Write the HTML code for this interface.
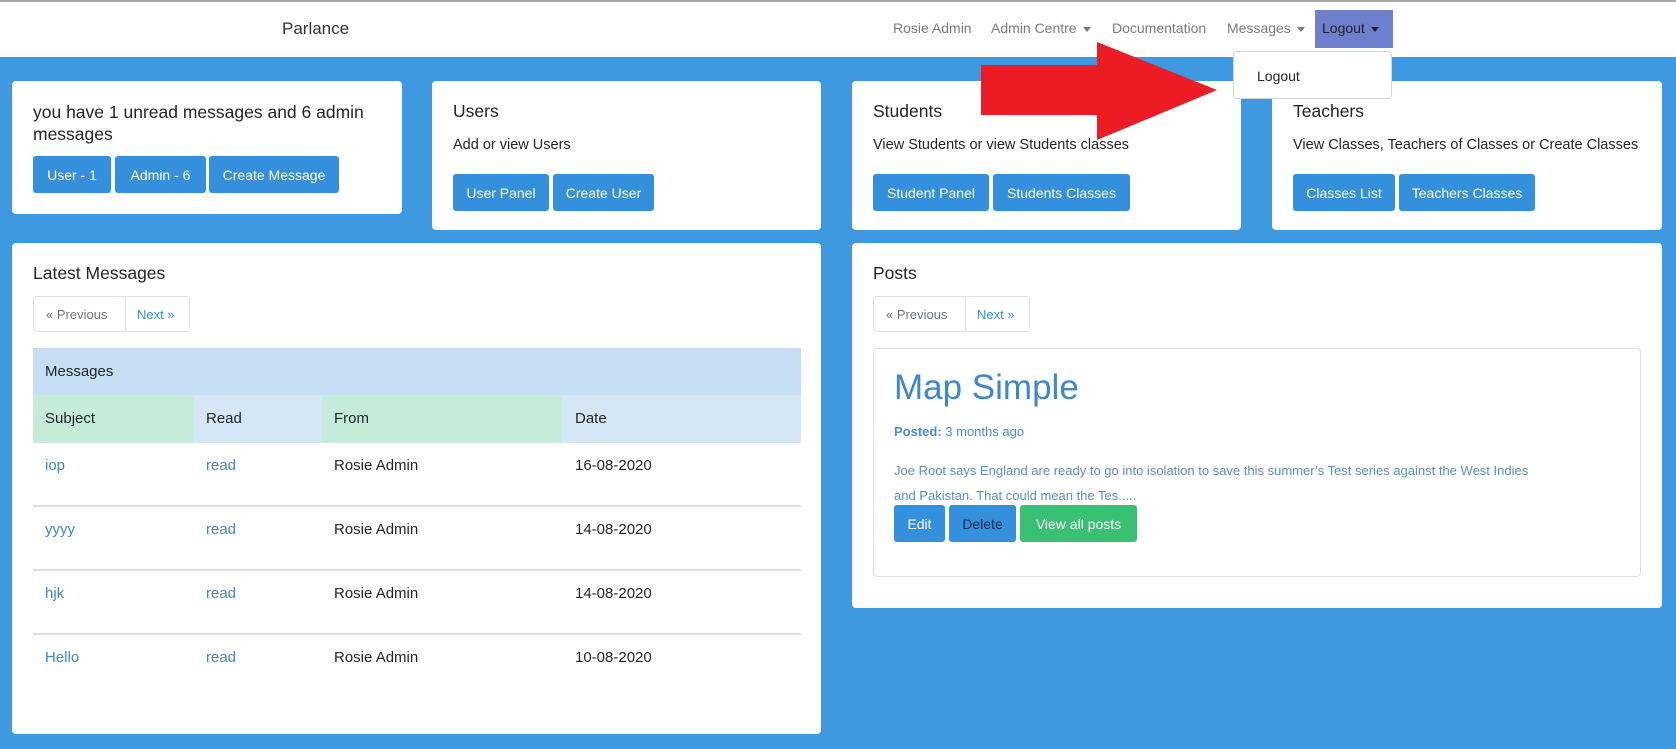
<!DOCTYPE html>
<html><head><meta charset="utf-8"><style>
*{box-sizing:border-box;margin:0;padding:0}
body{width:1676px;height:749px;overflow:hidden;background:#3f99e1;font-family:"Liberation Sans",sans-serif;color:#212529;position:relative}
.a{position:absolute}
.nav{left:0;top:0;width:1676px;height:57px;background:#fff;border-top:2px solid #a8a8a8}
.card{position:absolute;background:#fff;border-radius:4px}
.btn{position:absolute;background:#3490dc;color:#fff;font-size:14px;border-radius:3px;display:flex;align-items:center;justify-content:center;height:37px}
.h{position:absolute;font-size:17.5px;color:#212529}
.t{position:absolute;font-size:14.5px;color:#212529}
.ni{position:absolute;top:20px;font-size:14px;color:#7b7b7b}
.car{display:inline-block;width:0;height:0;border-left:4px solid transparent;border-right:4px solid transparent;border-top:5px solid currentColor;vertical-align:middle;margin-left:6px}
.pg{position:absolute;height:36px;border:1px solid #dee2e6;border-radius:3px;font-size:13px;background:#fff}
.pg span{position:absolute;top:10px}
.cell{position:absolute;font-size:15px}
.ln{position:absolute;left:33px;width:768px;height:2px;background:#dcdfe3}
</style></head><body>
<div class="a nav"></div>
<div class="a" style="left:282px;top:19px;font-size:17px;color:#333">Parlance</div>
<div class="ni" style="left:893px">Rosie Admin</div>
<div class="ni" style="left:991px">Admin Centre<span class="car"></span></div>
<div class="ni" style="left:1112px">Documentation</div>
<div class="ni" style="left:1227px">Messages<span class="car"></span></div>
<div class="a" style="left:1315px;top:10px;width:78px;height:38px;background:#6f7fcf"></div>
<div class="ni" style="left:1322px;color:#222">Logout<span class="car"></span></div>

<div class="card" style="left:12px;top:81px;width:390px;height:133px"></div>
<div class="h" style="left:33px;top:101px;line-height:22px;width:360px">you have 1 unread messages and 6 admin messages</div>
<div class="btn" style="left:33px;top:156px;width:78px">User - 1</div>
<div class="btn" style="left:115px;top:156px;width:91px">Admin - 6</div>
<div class="btn" style="left:209px;top:156px;width:130px">Create Message</div>

<div class="card" style="left:432px;top:81px;width:389px;height:149px"></div>
<div class="h" style="left:453px;top:101px">Users</div>
<div class="t" style="left:453px;top:137px">Add or view Users</div>
<div class="btn" style="left:453px;top:174px;width:96px">User Panel</div>
<div class="btn" style="left:553px;top:174px;width:101px">Create User</div>

<div class="card" style="left:852px;top:81px;width:389px;height:149px"></div>
<div class="h" style="left:873px;top:101px">Students</div>
<div class="t" style="left:873px;top:137px">View Students or view Students classes</div>
<div class="btn" style="left:873px;top:174px;width:116px">Student Panel</div>
<div class="btn" style="left:993px;top:174px;width:137px">Students Classes</div>

<div class="card" style="left:1272px;top:81px;width:390px;height:149px"></div>
<div class="h" style="left:1293px;top:101px">Teachers</div>
<div class="t" style="left:1293px;top:137px">View Classes, Teachers of Classes or Create Classes</div>
<div class="btn" style="left:1293px;top:174px;width:102px">Classes List</div>
<div class="btn" style="left:1399px;top:174px;width:136px">Teachers Classes</div>

<div class="card" style="left:12px;top:243px;width:809px;height:491px"></div>
<div class="h" style="left:33px;top:263px">Latest Messages</div>
<div class="pg" style="left:33px;top:296px;width:157px"><span style="left:12px;color:#6c757d">« Previous</span><span style="left:91px;top:0;width:1px;height:34px;background:#dee2e6"></span><span style="left:103px;color:#3490dc">Next »</span></div>
<div class="a" style="left:33px;top:348px;width:768px;height:47px;background:#c6dff4"></div>
<div class="cell" style="left:45px;top:363px">Messages</div>
<div class="a" style="left:33px;top:395px;width:161px;height:48px;background:#c5ecd9"></div>
<div class="a" style="left:194px;top:395px;width:128px;height:48px;background:#d5e7f7"></div>
<div class="a" style="left:322px;top:395px;width:240px;height:48px;background:#c5ecd9"></div>
<div class="a" style="left:562px;top:395px;width:239px;height:48px;background:#d5e7f7"></div>
<div class="cell" style="left:45px;top:410px">Subject</div>
<div class="cell" style="left:206px;top:410px">Read</div>
<div class="cell" style="left:334px;top:410px">From</div>
<div class="cell" style="left:575px;top:410px">Date</div>

<div class="cell" style="left:45px;top:457px;color:#3d87cc">iop</div><div class="cell" style="left:206px;top:457px;color:#3d87cc">read</div><div class="cell" style="left:334px;top:457px">Rosie Admin</div><div class="cell" style="left:575px;top:457px">16-08-2020</div>
<div class="ln" style="top:505px"></div>
<div class="cell" style="left:45px;top:521px;color:#3d87cc">yyyy</div><div class="cell" style="left:206px;top:521px;color:#3d87cc">read</div><div class="cell" style="left:334px;top:521px">Rosie Admin</div><div class="cell" style="left:575px;top:521px">14-08-2020</div>
<div class="ln" style="top:569px"></div>
<div class="cell" style="left:45px;top:585px;color:#3d87cc">hjk</div><div class="cell" style="left:206px;top:585px;color:#3d87cc">read</div><div class="cell" style="left:334px;top:585px">Rosie Admin</div><div class="cell" style="left:575px;top:585px">14-08-2020</div>
<div class="ln" style="top:633px"></div>
<div class="cell" style="left:45px;top:649px;color:#3d87cc">Hello</div><div class="cell" style="left:206px;top:649px;color:#3d87cc">read</div><div class="cell" style="left:334px;top:649px">Rosie Admin</div><div class="cell" style="left:575px;top:649px">10-08-2020</div>

<div class="card" style="left:852px;top:243px;width:810px;height:365px"></div>
<div class="h" style="left:873px;top:263px">Posts</div>
<div class="pg" style="left:873px;top:296px;width:157px"><span style="left:12px;color:#6c757d">« Previous</span><span style="left:91px;top:0;width:1px;height:34px;background:#dee2e6"></span><span style="left:103px;color:#3490dc">Next »</span></div>
<div class="a" style="left:873px;top:348px;width:768px;height:229px;border:1px solid #dcdfe3;border-radius:4px"></div>
<div class="a" style="left:894px;top:368px;font-size:35px;color:#3d87cc">Map Simple</div>
<div class="a" style="left:894px;top:424px;font-size:13px;color:#4a8cc9"><b>Posted:</b> 3 months ago</div>
<div class="a" style="left:894px;top:458px;width:650px;font-size:13px;line-height:25px;color:#5b8fc2">Joe Root says England are ready to go into isolation to save this summer’s Test series against the West Indies and Pakistan. That could mean the Tes.....</div>
<div class="btn" style="left:894px;top:505px;width:51px">Edit</div>
<div class="btn" style="left:949px;top:505px;width:67px;color:#1a2a4a">Delete</div>
<div class="btn" style="left:1020px;top:505px;width:117px;background:#38c172">View all posts</div>

<div class="a" style="left:1233px;top:51px;width:159px;height:48px;background:#fff;border:1px solid #d5d5d5;border-radius:3px"></div>
<div class="a" style="left:1257px;top:68px;font-size:14px;color:#212529">Logout</div>

<svg class="a" style="left:0;top:0" width="1676" height="749"><polygon points="981,65 1097,65 1097,42 1217,90 1097,140 1097,115 981,115" fill="#ed1c24"/></svg>
</body></html>
